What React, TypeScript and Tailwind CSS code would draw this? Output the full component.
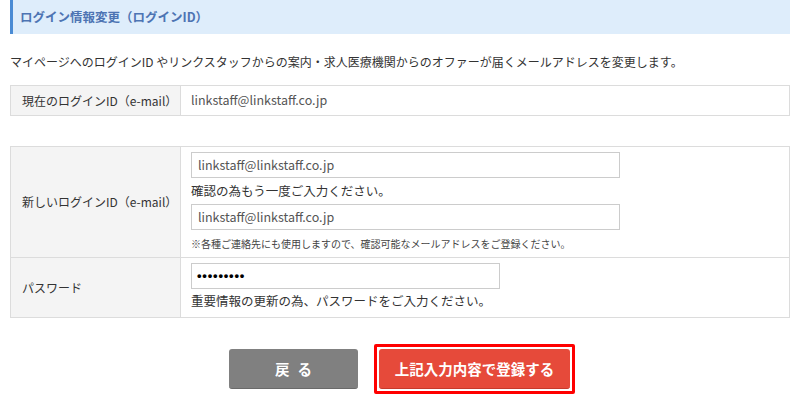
import React from "react";

const font = { fontFamily: '"Noto Sans CJK JP", "Noto Sans", sans-serif' };

export default function App() {
  return (
    <div className="w-[800px] h-[400px] bg-white text-[#333] overflow-hidden" style={font}>
      <div className="px-[10px]">
        <div className="h-[34px] bg-[#deedfb] border-l-[3px] border-[#4a8bd4] flex items-center pl-[7px]">
          <span className="text-[12.5px] font-bold text-[#4d74b3] leading-none whitespace-nowrap">ログイン情報変更（ログインID）</span>
        </div>
        <p className="text-[12px] leading-none mt-[22px] text-[#333] whitespace-nowrap">
          マイページへのログインID やリンクスタッフからの案内・求人医療機関からのオファーが届くメールアドレスを変更します。
        </p>
        <div className="mt-[17px] flex border border-[#dcdcdc] h-[31px]">
          <div className="w-[170px] shrink-0 bg-[#f4f4f4] border-r border-[#dcdcdc] flex items-center pl-[11px] text-[12px] whitespace-nowrap">
            現在のログインID（e-mail）
          </div>
          <div className="flex-1 flex items-center pl-[10px] text-[12.5px] text-[#555]">linkstaff@linkstaff.co.jp</div>
        </div>

        <div className="mt-[30px] border border-[#dcdcdc]">
          <div className="flex border-b border-[#dcdcdc]">
            <div className="w-[170px] shrink-0 bg-[#f4f4f4] border-r border-[#dcdcdc] flex items-center pl-[11px] text-[12px] whitespace-nowrap">
              新しいログインID（e-mail）
            </div>
            <div className="flex-1 pl-[10px] pt-[5px]">
              <div className="w-[429px] h-[26px] border border-[#cccccc] flex items-center pl-[6px] text-[12.5px] text-[#555]">
                linkstaff@linkstaff.co.jp
              </div>
              <div className="h-[26px] flex items-center text-[12.5px] whitespace-nowrap">確認の為もう一度ご入力ください。</div>
              <div className="w-[429px] h-[26px] border border-[#cccccc] flex items-center pl-[6px] text-[12.5px] text-[#555]">
                linkstaff@linkstaff.co.jp
              </div>
              <div className="h-[27px] flex items-center text-[10px] text-[#444] whitespace-nowrap">
                ※各種ご連絡先にも使用しますので、確認可能なメールアドレスをご登録ください。
              </div>
            </div>
          </div>
          <div className="flex h-[59px]">
            <div className="w-[170px] shrink-0 bg-[#f4f4f4] border-r border-[#dcdcdc] flex items-center pl-[11px] text-[12px]">
              パスワード
            </div>
            <div className="flex-1 pl-[10px] pt-[5px]">
              <div
                className="w-[309px] h-[26px] border border-[#cccccc] flex items-center pl-[5px] text-[13px] font-bold text-black tracking-[0.8px]"
                style={{ fontFamily: '"Liberation Sans", Arial, sans-serif' }}
              >
                •••••••••
              </div>
              <div className="h-[24px] flex items-center text-[12.5px] whitespace-nowrap">重要情報の更新の為、パスワードをご入力ください。</div>
            </div>
          </div>
        </div>

        <div className="mt-[26px] flex justify-center items-center gap-[16px] pl-[4px]">
          <div className="w-[129px] h-[40px] rounded-[3px] bg-[#808080] border-b border-[#6a6a6a] flex items-center justify-center text-white font-bold text-[14.5px] tracking-[8px] pl-[8px]">
            戻る
          </div>
          <div className="border-[3px] border-[#ff0000] p-[2px] rounded-[2px]">
            <div className="w-[191px] h-[40px] rounded-[3px] bg-[#e64a3a] border-b border-[#c73a2b] flex items-center justify-center text-white font-bold text-[14.5px]">
              上記入力内容で登録する
            </div>
          </div>
        </div>
      </div>
    </div>
  );
}
